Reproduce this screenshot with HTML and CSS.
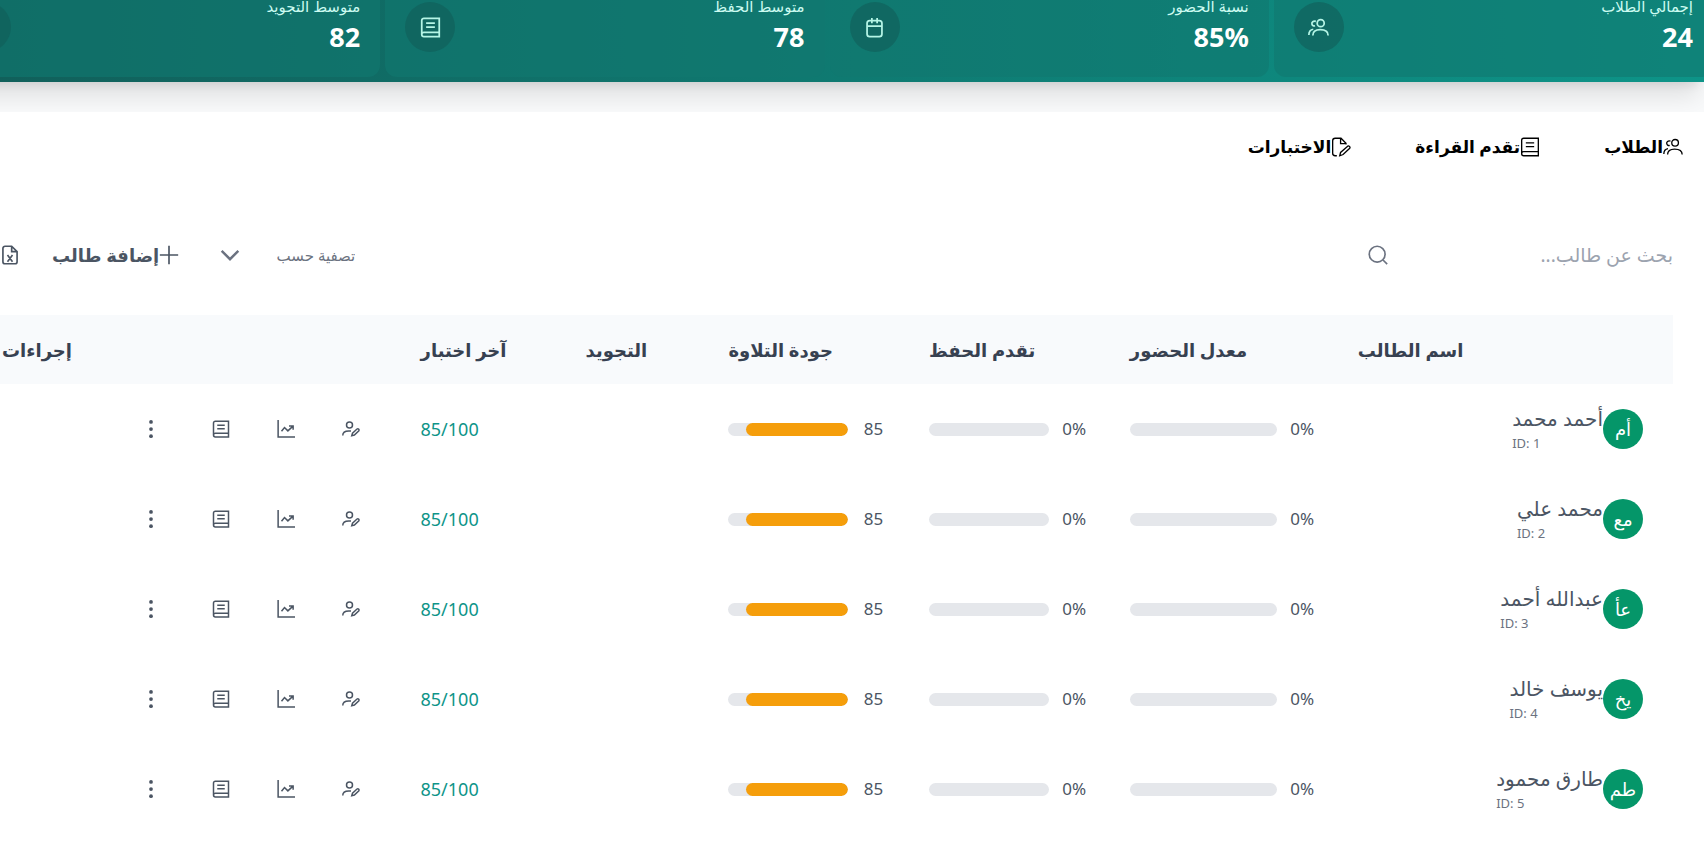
FILE: index.html
```html
<!DOCTYPE html>
<html lang="ar" dir="rtl">
<head>
<meta charset="utf-8">
<meta name="viewport" content="width=device-width, initial-scale=1">
<title>الطلاب</title>
<link rel="stylesheet" href="styles.css">
</head>
<body>
<svg class="sprite" aria-hidden="true">
  <symbol id="i-users" viewBox="0 0 24 24"><circle cx="14.500" cy="7" r="4"/><path d="M5.500 21c0-4.500 3-6.500 8.500-6.500s9 2 9 6.500M9 5c-3-1-5 1-4.500 3s2 2.500 3.500 2M1 20.500c0-4 1.500-6 5-6.500"/></symbol>
  <symbol id="i-book" viewBox="0 0 24 24"><path d="M22 17.500V1.500H4.500A2.500 2.500 0 0 0 2 4v16a2.500 2.500 0 0 0 2.500 2.500H22v-5H4.500A2.500 2.500 0 0 0 2 20M7 7h10M7 11.500h10"/></symbol>
  <symbol id="i-calendar" viewBox="0 0 24 24"><rect x="3.500" y="4" width="17" height="18.500" rx="3"/><path d="M3.500 10.500h17M9 1v6M15 1v6"/></symbol>
  <symbol id="i-exam" viewBox="0 0 24 24"><path d="M7 22.500H5A3 3 0 0 1 2 19.500v-15a3 3 0 0 1 3-3h7l6 6V9M11.500 2v6H18M10.500 22.500l1-4 8.500-7.500c1.500-1 3.500 1 2.500 2.500l-8 7.500z"/></symbol>
  <symbol id="i-search" viewBox="0 0 24 24"><circle cx="11" cy="11" r="9.500"/><path d="m18 18 5 5"/></symbol>
  <symbol id="i-down" viewBox="0 0 24 24"><path d="m2 7 10 10L22 7"/></symbol>
  <symbol id="i-plus" viewBox="0 0 24 24"><path d="M12 1v22M1 12h22"/></symbol>
  <symbol id="i-excel" viewBox="0 0 24 24"><path d="M14 1.500H6A2.500 2.500 0 0 0 3.500 4v16A2.500 2.500 0 0 0 6 22.500h12a2.500 2.500 0 0 0 2.500-2.500V8zv6.500h6.500M9 12l6 8M15 12l-6 8"/></symbol>
  <symbol id="i-edit" viewBox="0 0 24 24"><circle cx="10" cy="6.500" r="4"/><path d="M1 20.500c0-4 3-6 8-6h3M13 21l1-3.500 6-5.500c1.500-1 3.500.5 2.500 2.500l-6 5.500z"/></symbol>
  <symbol id="i-chart" viewBox="0 0 24 24"><path d="M1.500 0v22.500H24M6 15l4-5 4.500 4.500L21 8.500M16 8h5.500v5"/></symbol>
  <symbol id="i-more" viewBox="0 0 24 24"><g fill="currentColor" stroke="none"><circle cx="12" cy="2.500" r="2.500"/><circle cx="12" cy="12" r="2.500"/><circle cx="12" cy="21.500" r="2.500"/></g></symbol>
</svg>

<header class="banner">
  <div class="stats">
    <div class="stat"><div><div class="stat-label">إجمالي الطلاب</div><div class="stat-value">24</div></div><span class="stat-icon"><svg class="icon"><use href="#i-users"/></svg></span></div>
    <div class="stat"><div><div class="stat-label">نسبة الحضور</div><div class="stat-value">85%</div></div><span class="stat-icon"><svg class="icon"><use href="#i-calendar"/></svg></span></div>
    <div class="stat"><div><div class="stat-label">متوسط الحفظ</div><div class="stat-value">78</div></div><span class="stat-icon"><svg class="icon"><use href="#i-book"/></svg></span></div>
    <div class="stat"><div><div class="stat-label">متوسط التجويد</div><div class="stat-value">82</div></div><span class="stat-icon"></span></div>
  </div>
</header>

<main class="panel">
  <nav class="tabs">
    <button class="tab"><svg class="icon"><use href="#i-users"/></svg>الطلاب</button>
    <button class="tab"><svg class="icon"><use href="#i-book"/></svg>تقدم القراءة</button>
    <button class="tab"><svg class="icon"><use href="#i-exam"/></svg>الاختبارات</button>
  </nav>

  <div class="toolbar">
    <div class="search">
      <input type="search" placeholder="بحث عن طالب..." aria-label="بحث عن طالب">
      <svg class="icon"><use href="#i-search"/></svg>
    </div>
    <div class="tools">
      <div class="filter">
        <select aria-label="تصفية حسب"><option>تصفية حسب</option></select>
        <svg class="icon"><use href="#i-down"/></svg>
      </div>
      <button class="tool"><svg class="icon"><use href="#i-plus"/></svg>إضافة طالب</button>
      <button class="tool" aria-label="Excel"><svg class="icon"><use href="#i-excel"/></svg></button>
    </div>
  </div>

  <div class="table-wrap">
  <table class="students">
    <colgroup><col class="c-name"><col class="c-attend"><col class="c-bar"><col class="c-bar"><col class="c-tajweed"><col class="c-exam"><col class="c-actions"></colgroup>
    <thead><tr><th>اسم الطالب</th><th>معدل الحضور</th><th>تقدم الحفظ</th><th>جودة التلاوة</th><th>التجويد</th><th>آخر اختبار</th><th>إجراءات</th></tr></thead>
    <tbody id="rows"></tbody>
  </table>
  </div>
</main>
<script src="app.js"></script>
</body>
</html>
```

FILE: app.js
```js
const students = [
  ["أحمد محمد", "أم"],
  ["محمد علي", "مع"],
  ["عبدالله أحمد", "عأ"],
  ["يوسف خالد", "يخ"],
  ["طارق محمود", "طم"]
];

const meter = (value, text) =>
  `<td class="meter-cell"><div class="meter"><span class="meter-text">${text}</span><span class="track"><span class="fill" style="width:${value}%"></span></span></div></td>`;

const action = (icon, label) =>
  `<button class="action" aria-label="${label}"><svg class="icon"><use href="#${icon}"/></svg></button>`;

document.getElementById("rows").innerHTML = students.map(([name, initials], i) => `
  <tr>
    <td><div class="student"><span class="avatar">${initials}</span><div class="who"><div class="name">${name}</div><div class="id"><bdi>ID: ${i + 1}</bdi></div></div></div></td>
    ${meter(0, "0%")}${meter(0, "0%")}${meter(85, "85")}
    <td></td>
    <td class="exam"><bdi>85/100</bdi></td>
    <td><div class="actions">${action("i-edit", "تعديل")}${action("i-chart", "التقدم")}${action("i-book", "القراءة")}${action("i-more", "المزيد")}</div></td>
  </tr>`).join("");
```

FILE: styles.css
```css
* { box-sizing: border-box; }

body {
  margin: 0;
  background: #f9fafb;
  color: #4b5563;
  font-family: "Noto Sans", "DejaVu Sans", sans-serif;
  font-size: 18px;
  line-height: 24px;
  overflow-x: hidden;
}

button, input, select {
  font: inherit;
  color: inherit;
  background: none;
  border: 0;
  padding: 0;
  outline: 0;
}

.sprite { position: absolute; width: 0; height: 0; }

.icon {
  flex: none;
  width: 20px;
  height: 20px;
  fill: none;
  stroke: currentColor;
  stroke-width: 2;
  overflow: visible;
}

.banner {
  margin-left: -59px;
  padding-bottom: 5px;
  background: linear-gradient(to left, #0d9488, #115e59);
  box-shadow: 0 20px 25px -5px rgba(0, 0, 0, 0.1), 0 8px 10px -6px rgba(0, 0, 0, 0.1);
}

.stats {
  display: grid;
  grid-template-columns: repeat(4, 1fr);
  gap: 5px;
  margin-right: -9px;
}

.stat {
  display: flex;
  justify-content: space-between;
  padding: 0 20px 22px;
  border-radius: 0 0 12px 12px;
  background: rgba(16, 120, 111, 0.6);
}

.stat-label {
  color: #ccfbf1;
  font-size: 15px;
  line-height: 12px;
  white-space: nowrap;
}

.stat-value {
  margin-top: 7px;
  color: #fff;
  font-size: 27px;
  font-weight: 700;
  line-height: 36px;
}

.stat-icon {
  display: flex;
  align-items: center;
  justify-content: center;
  width: 50px;
  height: 50px;
  margin-top: 2px;
  border-radius: 50%;
  background: rgba(17, 94, 89, 0.6);
  color: #b5f5e6;
}

.stat-icon .icon { width: 21px; height: 21px; }

.panel {
  position: relative;
  margin-top: 30px;
  min-height: calc(100vh - 112px);
  background: #fff;
}

.tabs {
  display: flex;
  gap: 64px;
  padding: 20px 21px 0;
}

.tab {
  display: flex;
  align-items: center;
  height: 30px;
  color: #000;
  font-size: 17px;
  font-weight: 700;
  white-space: nowrap;
}

.tab .icon { stroke-width: 1.6; }

.toolbar {
  display: flex;
  justify-content: space-between;
  margin-top: 73px;
  padding-right: 31px;
  height: 40px;
  align-items: center;
}

.search {
  display: flex;
  align-items: center;
  width: 305px;
  color: #6b7280;
}

.search input { flex: 1; min-width: 0; font-size: 19px; }
.search input::placeholder { color: #9ca3af; opacity: 1; }

.tools { display: flex; align-items: center; }

.filter {
  display: flex;
  align-items: center;
  gap: 36px;
  margin-left: 41px;
  color: #6b7280;
}

.filter select { appearance: none; font-size: 15px; }
.filter .icon { stroke-width: 3; }

.tool {
  display: flex;
  align-items: center;
  font-weight: 700;
  white-space: nowrap;
}

.tool + .tool { margin-right: 32px; }

.table-wrap {
  margin: 40px 31px 0 -28px;
}

.students {
  width: 100%;
  table-layout: fixed;
  border-collapse: collapse;
}

.c-name { width: 20.3%; }
.c-attend { width: 13.4%; }
.c-bar { width: 11.8%; }
.c-tajweed { width: 8.4%; }
.c-exam { width: 9.7%; }

.students th {
  height: 69px;
  padding: 0 30px;
  background: #f8fafc;
  color: #374151;
  text-align: left;
  white-space: nowrap;
}

.students td { height: 90px; padding: 0 30px; }
.students .meter-cell { padding-right: 12px; }

.student { display: flex; align-items: center; }

.avatar {
  flex: none;
  width: 40px;
  height: 40px;
  border-radius: 50%;
  background: #059669;
  color: #fff;
  line-height: 40px;
  text-align: center;
}

.who { padding-top: 4px; text-align: left; white-space: nowrap; }
.name { font-size: 20px; }
.id { color: #6b7280; font-size: 13px; }

.meter { display: flex; align-items: center; gap: 12px; }
.meter-text { width: 27px; font-size: 17px; text-align: center; }

.track {
  flex: 1;
  height: 13px;
  border-radius: 7px;
  background: #e5e7eb;
  overflow: hidden;
}

.fill {
  display: block;
  height: 100%;
  border-radius: 7px;
  background: #f59e0b;
}

.students .exam { color: #0d9488; text-align: left; }

.actions { display: flex; gap: 45px; }
.action { display: flex; }
.action:last-child { margin-right: 5px; }
.action .icon { height: 18px; }
```
